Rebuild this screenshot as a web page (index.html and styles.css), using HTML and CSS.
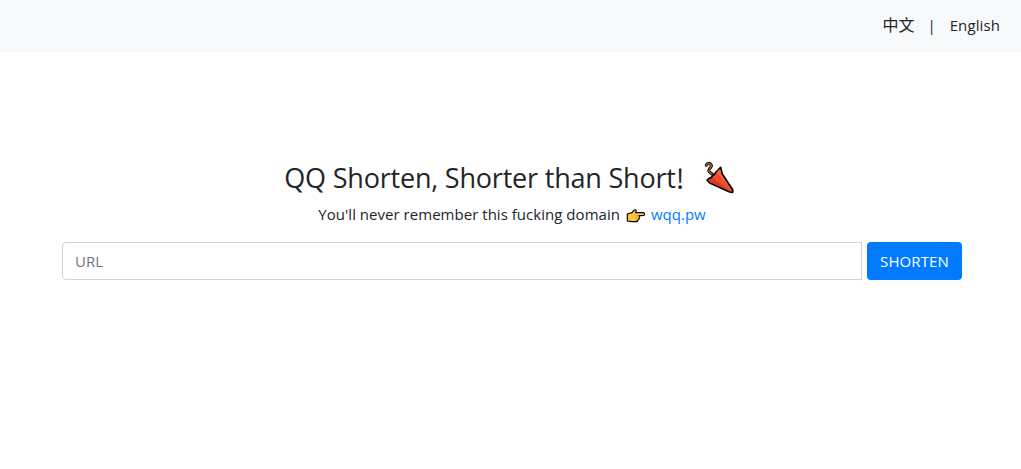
FILE: index.html
```
<!DOCTYPE html>
<html lang="zh-CN">
<head>
    <meta charset="UTF-8">
    <meta name="viewport" content="width=device-width, initial-scale=1.0">
    <title>QQ Shorten</title>
    <link rel="stylesheet" href="styles.css">
</head>
<body>
    <nav class="navbar">
        <a href="#" class="lang-zh">中文</a>
        <span class="divider">|</span>
        <a href="#" class="lang-en">English</a>
    </nav>
    <main class="container">
        <h3 class="title">
            <span class="title-text">QQ Shorten, Shorter than Short</span><span class="mark">!</span>
            <svg class="umbrella" viewBox="27 21 90 96" aria-hidden="true">
                <path d="M34 31C36 23 50 24 49 33C48 40 39 42 42 49Q46 55 56 60" fill="none" stroke="#000" stroke-width="9" stroke-linecap="round"/>
                <path d="M34 31C36 23 50 24 49 33C48 40 39 42 42 49Q46 55 56 60" fill="none" stroke="#b56a16" stroke-width="4" stroke-linecap="round"/>
                <path d="M36 75Q43 68 50 67Q51 59 59 58Q60 50 68 47Q71 42 77 37L82 57L113 104L113 112L104 111L44 84Z" fill="#ee4c2c" stroke="#000" stroke-width="5" stroke-linejoin="round"/>
                <path d="M66 52Q71 46 75 43L79 59L109 106Z" fill="#f4694a"/>
                <path d="M41 76Q46 71 53 70L106 109L46 81Z" fill="#d63a26"/>
            </svg>
        </h3>
        <p class="subtitle">
            <span class="subtitle-text">You'll never remember this fucking domain</span>
            <svg class="hand" viewBox="0 0 60 45" aria-hidden="true">
                <path d="M4 18L18 14L25 6Q32 3 30 11L29 14H53Q58 18 54 22L39 23Q43 27 39 29Q41 34 36 35Q36 41 30 41H17L4 39Z" fill="#ffc83d" stroke="#000" stroke-width="3.5" stroke-linejoin="round"/>
                <path d="M29 23H39M29 29H38M28 35H36" fill="none" stroke="#c98a1b" stroke-width="2"/>
            </svg>
            <a href="#" class="domain">wqq.pw</a>
        </p>
        <form class="url-form">
            <input type="text" class="url-input" placeholder="URL">
            <button type="button" class="submit-btn">SHORTEN</button>
        </form>
    </main>
</body>
</html>
```
FILE: styles.css
```
* {
    box-sizing: border-box;
}

body {
    margin: 0;
    font-family: "Open Sans", "Noto Sans CJK SC", sans-serif;
    font-size: 15px;
    line-height: 24px;
    color: #212529;
    background: #fff;
}

.navbar {
    display: flex;
    justify-content: flex-end;
    align-items: center;
    height: 52px;
    padding: 0 21px 2px 0;
    background: #f8f9fa;
}

.navbar a {
    color: #212529;
    text-decoration: none;
}

.lang-zh {
    font-size: 16px;
}

.lang-en {
    letter-spacing: 0.1px;
}

.divider {
    margin: 0 14px 0 13px;
}

.container {
    padding: 108px 59px 0 62px;
}

.title {
    display: flex;
    justify-content: center;
    align-items: center;
    height: 36px;
    margin: 0 0 6px;
    padding-right: 6px;
    font-size: 27px;
    font-weight: 400;
}

.title-text {
    letter-spacing: -0.2px;
}

.mark {
    width: 28px;
    font-family: "Noto Sans CJK SC", sans-serif;
}

.umbrella {
    width: 30px;
    height: 32px;
}

.subtitle {
    display: flex;
    justify-content: center;
    align-items: center;
    height: 24px;
    margin: 0 0 16px;
}

.subtitle-text {
    letter-spacing: 0.03px;
}

.hand {
    width: 20px;
    height: 15px;
    margin: 3px 5px 0 6px;
}

.domain {
    color: #007bff;
    text-decoration: none;
}

.url-form {
    display: flex;
    gap: 5px;
}

.url-input {
    flex: 1;
    height: 38px;
    padding: 6px 12px;
    font: inherit;
    border: 1px solid #ced4da;
    border-radius: 4px 0 0 4px;
}

.url-input::placeholder {
    color: #6c757d;
}

.submit-btn {
    width: 95px;
    height: 38px;
    padding: 0;
    font: inherit;
    letter-spacing: 0.1px;
    color: #fff;
    background: #007bff;
    border: none;
    border-radius: 4px;
    cursor: pointer;
}
```
